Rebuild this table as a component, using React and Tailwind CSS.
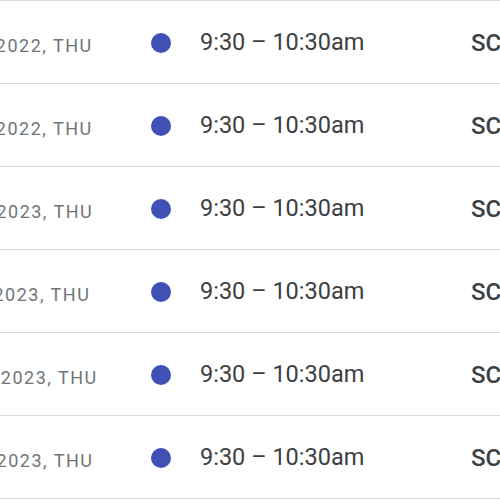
import React from "react";

const rows = [
  { date: "DEC 1, 2022, THU" },
  { date: "DEC 8, 2022, THU" },
  { date: "JAN 5, 2023, THU" },
  { date: "FEB 2, 2023, THU" },
  { date: "MAR 2, 2023, THU" },
  { date: "JUN 1, 2023, THU" },
];

export default function App() {
  return (
    <div className="w-[500px] h-[500px] overflow-hidden bg-white" style={{ fontFamily: "Roboto, 'Noto Sans', sans-serif" }}>
      <div className="ml-[-71px] w-[900px] border-t border-[#dadce0]">
        {rows.map((r, i) => (
          <div key={i} className="flex items-center h-[83px] border-b border-[#dadce0] pt-[1px]">
            <div className="w-[222px] shrink-0 text-[18px] tracking-[1.5px] text-[#70757a] whitespace-nowrap pt-[5px]">
              {r.date}
            </div>
            <div className="w-5 h-5 rounded-full bg-[#3f51b5] shrink-0" />
            <div className="ml-[29px] w-[271px] shrink-0 text-[23.5px] text-[#3c4043] whitespace-nowrap">
              9:30 – 10:30am
            </div>
            <div className="text-[24px] font-medium text-[#3c4043] whitespace-nowrap">SCRUM Meeting</div>
          </div>
        ))}
      </div>
    </div>
  );
}
